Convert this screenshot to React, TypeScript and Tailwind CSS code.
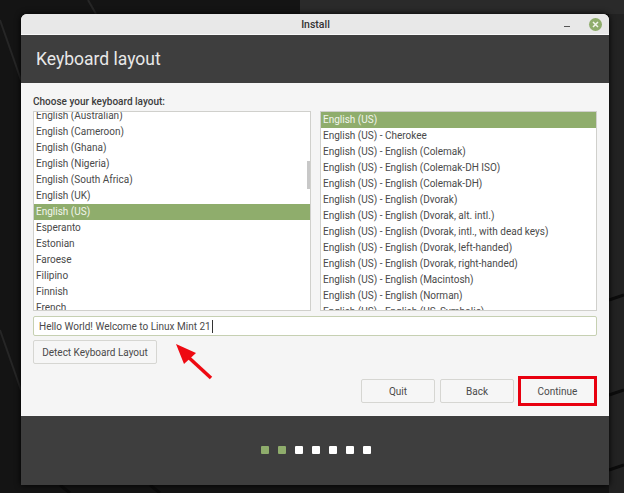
const left = ["English (Australian)","English (Cameroon)","English (Ghana)","English (Nigeria)","English (South Africa)","English (UK)","English (US)","Esperanto","Estonian","Faroese","Filipino","Finnish","French"];
const right = ["English (US)","English (US) - Cherokee","English (US) - English (Colemak)","English (US) - English (Colemak-DH ISO)","English (US) - English (Colemak-DH)","English (US) - English (Dvorak)","English (US) - English (Dvorak, alt. intl.)","English (US) - English (Dvorak, intl., with dead keys)","English (US) - English (Dvorak, left-handed)","English (US) - English (Dvorak, right-handed)","English (US) - English (Macintosh)","English (US) - English (Norman)","English (US) - English (US, Symbolic)"];

function List({ items, selected, offset, className }: { items: string[]; selected: string; offset: string; className: string }) {
  return (
    <div className={`relative h-[200px] overflow-hidden border border-[#d0d0cc] bg-white ${className}`}>
      <div className={offset}>
        {items.map((t) => (
          <div key={t} className={`h-4 pl-[2px] text-[10px] leading-[15px] whitespace-nowrap ${t === selected ? "bg-[#8fad6c] text-[#f2f5ec]" : "text-[#4a4a4a]"}`}>{t}</div>
        ))}
      </div>
    </div>
  );
}

function Btn({ label, className }: { label: string; className: string }) {
  return <div className={`flex h-6 items-center justify-center rounded-[2px] border border-[#d6d6d2] bg-[#f6f6f6] text-[10px] text-[#4a4a4a] ${className}`}>{label}</div>;
}

export default function App() {
  return (
    <div className="relative h-[493px] w-[624px] overflow-hidden bg-[#141414] pt-[14px] pl-[21px] font-['Roboto',sans-serif]">
      <svg className="absolute inset-0" width="624" height="493" viewBox="0 0 624 493" fill="none">
        <path d="M300 0H624V14H300Z" fill="#2a2a2a" />
        <path d="M609 14H624V493H609Z" fill="#222" />
        <path d="M88 0L96 14M0 20L21 80M0 330L21 390" stroke="#262626" strokeWidth="2" />
        <path d="M609 300L624 295M609 395L624 390M609 470L624 465M60 485L70 493M150 485L160 493" stroke="#0c0c0c" strokeWidth="3" />
      </svg>
      <div className="relative flex h-[471px] w-[588px] flex-col overflow-hidden rounded-t-[6px] bg-[#f5f5f5] shadow-[0_0_6px_#000]">
        <div className="relative flex h-[21px] shrink-0 items-center justify-center border-b border-[#f8f8f8] bg-[#e8e8e8] pt-[1px] pl-[1px] text-[10.5px] font-medium text-[#333]">
          Install
          <div className="absolute top-[12px] left-[543px] h-px w-[6px] bg-[#555]" />
          <div className="absolute top-[4px] left-[568px] flex h-[13px] w-[13px] items-center justify-center rounded-full bg-[#8fad6c]">
            <svg width="7" height="7" viewBox="0 0 7 7"><path d="M1 1L6 6M6 1L1 6" stroke="#f2f5ec" strokeWidth="1.5" /></svg>
          </div>
        </div>
        <div className="flex h-[48px] shrink-0 items-center bg-[#3e3e3e] pt-[1px] pl-[15px] text-[17.5px] text-[#e8e8e8]">Keyboard layout</div>
        <div className="flex h-[332px] shrink-0 flex-col px-3">
          <div className="flex h-[28px] shrink-0 items-end pb-[2px] text-[10px] font-medium text-[#3c3c3c]">Choose your keyboard layout:</div>
          <div className="flex gap-[9px]">
            <div className="relative">
              <List items={left} selected="English (US)" offset="-mt-[4px]" className="w-[278px]" />
              <div className="absolute top-[50px] right-[1px] h-[28px] w-[3px] bg-[#c8c8c8]" />
            </div>
            <List items={right} selected="English (US)" offset="" className="w-[277px]" />
          </div>
          <div className="mt-[5px] flex h-[20px] w-[564px] items-center rounded-[2px] border border-[#c6d0b2] bg-white pl-[5px] text-[10px] text-[#4a4a4a]">
            Hello World! Welcome to Linux Mint 21<span className="ml-px h-[13px] w-px bg-[#333]" />
          </div>
          <Btn label="Detect Keyboard Layout" className="mt-[4px] w-[124px]" />
          <div className="mt-3 flex items-center justify-end">
            <Btn label="Quit" className="w-[74px]" />
            <Btn label="Back" className="ml-[5px] w-[74px]" />
            <div className="ml-[4px] flex h-[30px] w-[79px] items-center justify-center border-[3px] border-[#e8000f] bg-[#f6f6f6] text-[10px] text-[#4a4a4a]">Continue</div>
          </div>
        </div>
        <div className="flex flex-1 items-center justify-center gap-[9px] border-t border-[#f8f8f8] bg-[#3e3e3e] pb-[1px] pl-[1px]">
          {[0, 1, 2, 3, 4, 5, 6].map((i) => (
            <div key={i} className={`h-2 w-2 rounded-[1px] ${i < 2 ? "bg-[#8fad6c]" : "bg-white"}`} />
          ))}
        </div>
      </div>
      <svg className="absolute top-[340px] left-[172px]" width="44" height="44" viewBox="0 0 44 44" fill="none">
        <path d="M39 38L14 15" stroke="#ee0a12" strokeWidth="3.5" />
        <path d="M4 4L24 13L12 24Z" fill="#ee0a12" />
      </svg>
    </div>
  );
}
